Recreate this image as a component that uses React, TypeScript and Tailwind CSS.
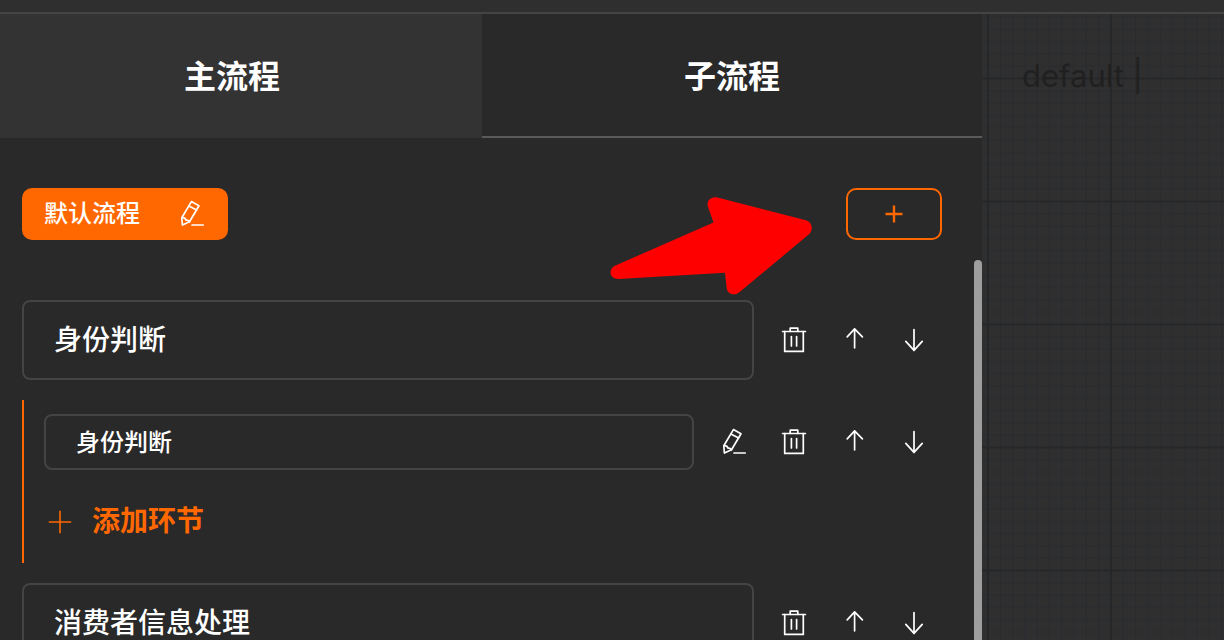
import { useState } from "react";
import type { ReactNode } from "react";

function Icon({ children }: { children: ReactNode }) {
  return (
    <svg
      viewBox="0 0 30 30"
      className="size-[30px]"
      fill="none"
      stroke="currentColor"
      strokeWidth="1.7"
      strokeLinecap="round"
      strokeLinejoin="round"
      aria-hidden="true"
    >
      {children}
    </svg>
  );
}

function PencilIcon() {
  return (
    <Icon>
      <path d="M14.4 2.6 22 6.8 12.5 22.8 5.4 26 4.8 18.8Z" />
      <path d="M11.9 6.9 19.6 11.1" />
      <path d="M4.8 18.8C6.8 18.5 8.4 19.4 8.9 21.1 10.3 20.9 11.7 21.5 12.5 22.8" />
      <path d="M15 26H26.2" />
    </Icon>
  );
}

function TrashIcon() {
  return (
    <Icon>
      <path d="M3.6 6.5H26.4" />
      <path d="M11.2 6.3V3.2H18.8V6.3" />
      <path d="M5.7 6.5V26.4H24.3V6.5" />
      <path d="M12.4 11.5V21M17.6 11.5V21" />
    </Icon>
  );
}

function UpIcon() {
  return (
    <Icon>
      <path d="M15.6 22.8V3.800M8.200 11.800 15.600 3.800 23.400 11.800" />
    </Icon>
  );
}

function DownIcon() {
  return (
    <Icon>
      <path d="M15 4.600V25.400M6.800 16.400 15 25.400 23.200 16.400" />
    </Icon>
  );
}

function IconButton({ label, children }: { label: string; children: ReactNode }) {
  return (
    <button type="button" aria-label={label} className="flex w-[60px] items-center justify-center">
      {children}
    </button>
  );
}

function RowActions({ editable = false }: { editable?: boolean }) {
  return (
    <div className="flex shrink-0">
      {editable && (
        <IconButton label="编辑">
          <PencilIcon />
        </IconButton>
      )}
      <IconButton label="删除">
        <TrashIcon />
      </IconButton>
      <IconButton label="上移">
        <UpIcon />
      </IconButton>
      <IconButton label="下移">
        <DownIcon />
      </IconButton>
    </div>
  );
}

function StageRow({ name }: { name: string }) {
  return (
    <div className="flex items-center gap-[10px]">
      <input
        aria-label="阶段名称"
        defaultValue={name}
        className="h-20 min-w-0 flex-1 rounded-lg border-2 border-[#444] bg-transparent px-[30px] pb-1 text-[28px] font-medium outline-none"
      />
      <RowActions />
    </div>
  );
}

function StepRow({ name }: { name: string }) {
  return (
    <div className="flex items-center gap-[10px]">
      <input
        aria-label="环节名称"
        defaultValue={name}
        className="h-14 min-w-0 flex-1 rounded-lg border-2 border-[#444] bg-transparent px-[30px] pb-1 text-2xl font-medium outline-none"
      />
      <RowActions editable />
    </div>
  );
}

function PointerArrow() {
  return (
    <svg viewBox="0 0 202 100" className="h-[100px] w-[202px]" aria-hidden="true">
      <path
        d="M5.500 69.500 103.500 26.500 98.200 11.500C95.800 5.500 100.500 0 107.500 1.500L196 24.300C202.500 26.500 203.500 34 199 38.300L129 96.500C123.500 100.500 117 97.500 116.600 91.500L115 76.700 8.500 83C-.5 83-2.500 73 5.500 69.500Z"
        fill="#f00"
      />
    </svg>
  );
}

function Canvas() {
  const minor = [1, 2, 3, 4, 5, 6, 7, 8, 9].map((n) => n * 12.3);
  return (
    <main className="relative overflow-hidden bg-[#2f2f2f]">
      <svg className="absolute inset-0 size-full" aria-hidden="true">
        <defs>
          <pattern id="grid" x="6" y="64.5" width="123" height="123" patternUnits="userSpaceOnUse">
            {minor.map((p) => (
              <path key={p} d={`M${p} 0V123M0 ${p}H123`} stroke="#2a2b2f" strokeWidth="1.3" />
            ))}
            <path d="M0 0V123M123 0V123M0 0H123M0 123H123" stroke="#262728" strokeWidth="2" />
          </pattern>
        </defs>
        <rect width="100%" height="100%" fill="url(#grid)" />
      </svg>
      <p className="relative pt-10 pl-10 font-[Inter,sans-serif] text-[31px] leading-[44px] whitespace-nowrap text-[#202020]">
        default |
      </p>
    </main>
  );
}

export default function App() {
  const [tab, setTab] = useState("sub");
  const tabs = [
    { id: "main", label: "主流程" },
    { id: "sub", label: "子流程" },
  ];

  return (
    <div className="flex h-screen flex-col overflow-hidden bg-[#292929] font-['Liberation_Sans','Noto_Sans_CJK_SC',sans-serif] text-white">
      <header className="h-[14px] shrink-0 border-b-2 border-[#444] bg-[#2f2f2f]" />
      <div className="grid min-h-0 flex-1 grid-cols-[982fr_242fr]">
        <section className="flex min-h-0 min-w-0 flex-col">
          <div role="tablist" className="grid shrink-0 grid-cols-[482fr_500fr]">
            {tabs.map((t) => (
              <button
                key={t.id}
                type="button"
                role="tab"
                aria-selected={tab === t.id}
                onClick={() => setTab(t.id)}
                className={
                  tab === t.id
                    ? "h-[124px] bg-[#292929] pt-0.5 text-[32px] font-bold shadow-[inset_0_-2px_0_#5a5a5a]"
                    : "h-[124px] bg-[#333] pt-0.5 pr-[18px] text-[32px] font-bold"
                }
              >
                {t.label}
              </button>
            ))}
          </div>

          <div className="flex shrink-0 items-center justify-between pt-[50px] pr-10 pb-5 pl-[22px]">
            <button
              type="button"
              className="flex h-[52px] w-[206px] items-center justify-between rounded-[10px] bg-[#ff6700] pr-[21px] pl-[22px] text-2xl font-medium"
            >
              默认流程
              <PencilIcon />
            </button>
            <div className="relative">
              <button
                type="button"
                aria-label="新增流程"
                className="flex h-[52px] w-24 items-center justify-center rounded-[10px] border-2 border-[#ff6700] text-[#ff6700]"
              >
                <svg viewBox="0 0 18 18" className="size-[18px]" stroke="currentColor" strokeWidth="2.4" aria-hidden="true">
                  <path d="M9 .5V17.500M.5 9H17.500" />
                </svg>
              </button>
              <div className="pointer-events-none absolute top-2 right-full mr-[34px]">
                <PointerArrow />
              </div>
            </div>
          </div>

          <div className="flex min-h-0 flex-1">
            <div className="min-w-0 flex-1 overflow-y-auto pt-10 pr-[30px] pl-[22px] [scrollbar-width:none]">
              <StageRow name="身份判断" />
              <div className="my-5 border-l-2 border-[#ff6700] pt-[14px] pb-[21px] pl-5">
                <StepRow name="身份判断" />
                <button
                  type="button"
                  className="mt-8 flex h-10 items-center gap-5 pl-1 text-[28px] font-bold text-[#ff6700]"
                >
                  <svg viewBox="0 0 24 24" className="size-6" stroke="currentColor" strokeWidth="1.600" aria-hidden="true">
                    <path d="M12 .8V23.200M.8 12H23.200" />
                  </svg>
                  添加环节
                </button>
              </div>
              <StageRow name="消费者信息处理" />
            </div>
            <div className="w-2 shrink-0 rounded-t-full bg-[#9e9e9e]" />
          </div>
        </section>
        <Canvas />
      </div>
    </div>
  );
}
